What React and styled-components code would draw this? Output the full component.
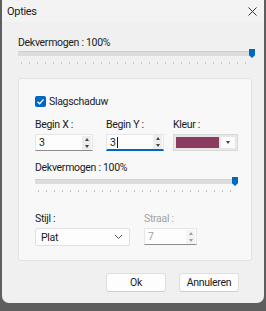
import styled, { createGlobalStyle } from 'styled-components'

const GlobalStyle = createGlobalStyle`
  html, body {
    margin: 0;
    padding: 0;
    background: #5e5e5e;
    font-family: Roboto, "Noto Sans", sans-serif;
    font-size: 10.5px;
    letter-spacing: -0.3px;
    color: #1b1b1b;
  }
`

const Window = styled.div`
  width: 262px;
  height: 303px;
  margin-left: 2px;
  background: #f0f0f0;
  border-radius: 0 0 7px 7px;
  display: flex;
  flex-direction: column;
  overflow: hidden;
`

const TitleBar = styled.div`
  height: 22px;
  padding: 0 7px 0 5px;
  display: flex;
  align-items: center;
  justify-content: space-between;
  background: #f3f3f3;
  font-size: 11px;
`

const Body = styled.div`
  padding: 14px 12px 0 16px;
  display: flex;
  flex-direction: column;
`

const Label = styled.div`
  font-size: 10.5px;
  line-height: 13px;
  color: ${p => (p.disabled ? '#a3a3a3' : '#1b1b1b')};
`

const SliderWrap = styled.div`
  position: relative;
  width: ${p => p.width}px;
  height: 16px;
  margin-top: ${p => p.top || 0}px;
`

const Track = styled.div`
  position: absolute;
  left: 0;
  right: 3px;
  top: 2px;
  height: 4px;
  background: #dcdcdc;
  border-top: 1px solid #d0d0d0;
`

const Ticks = styled.div`
  position: absolute;
  left: 3px;
  right: 3px;
  top: 13px;
  height: 2px;
  background: repeating-linear-gradient(90deg, #c4c4c4 0 1px, transparent 1px 8px);
`

const Thumb = styled.div`
  position: absolute;
  right: 0;
  top: 0;
  width: 6px;
  height: 9px;
  background: #0067c0;
  clip-path: polygon(0 0, 100% 0, 100% 70%, 50% 100%, 0 70%);
`

const Panel = styled.div`
  margin-top: 13px;
  width: 234px;
  height: 183px;
  box-sizing: border-box;
  background: #f8f8f8;
  border: 1px solid #e3e3e3;
  border-radius: 3px;
  padding: 16px 0 0 16px;
  display: flex;
  flex-direction: column;
`

const CheckRow = styled.label`
  height: 13px;
  display: flex;
  align-items: center;
  gap: 3px;
`

const Box = styled.span`
  width: 11px;
  height: 11px;
  border-radius: 2px;
  background: #0067c0;
  display: flex;
  align-items: center;
  justify-content: center;
`

const Row = styled.div`
  display: flex;
  gap: ${p => p.gap || 13}px;
  margin-top: ${p => p.top || 0}px;
`

const Field = styled.div`
  display: flex;
  flex-direction: column;
  gap: 3px;
`

const ColorField = styled(Field)`
  margin-left: -4px;
`

const Input = styled.div`
  width: ${p => p.width}px;
  height: 17px;
  box-sizing: border-box;
  background: #fdfdfd;
  border: 1px solid #e6e6e6;
  border-bottom: ${p => (p.focused ? '2px solid #0067c0' : '1px solid #8c8c8c')};
  display: flex;
  align-items: center;
  padding-left: 3px;
  color: ${p => (p.disabled ? '#a3a3a3' : '#1b1b1b')};
`

const Caret = styled.span`
  width: 1px;
  height: 11px;
  background: #1b1b1b;
  margin-left: 1px;
`

const Spin = styled.div`
  margin-left: auto;
  width: 9px;
  height: 14px;
  margin-right: 1px;
  background: #ededed;
  display: flex;
  flex-direction: column;
  align-items: center;
  justify-content: space-around;
  opacity: ${p => (p.disabled ? 0.5 : 1)};
`

const Tri = styled.span`
  width: 0;
  height: 0;
  border-left: 2.5px solid transparent;
  border-right: 2.5px solid transparent;
  ${p => (p.up ? 'border-bottom: 3px solid #444;' : 'border-top: 3px solid #444;')}
`

const ColorBox = styled.div`
  width: 65px;
  height: 17px;
  box-sizing: border-box;
  background: #e7e7e7;
  border: 1px solid #d9d9d9;
  padding: 2px;
  display: flex;
  gap: 2px;
`

const Swatch = styled.div`
  flex: 1;
  background: #8a3b5f;
`

const DropBtn = styled.div`
  width: 14px;
  background: #fbfbfb;
  display: flex;
  align-items: center;
  justify-content: center;
`

const Select = styled.div`
  width: 95px;
  height: 18px;
  box-sizing: border-box;
  background: #fdfdfd;
  border: 1px solid #e0e0e0;
  border-radius: 2px;
  display: flex;
  align-items: center;
  justify-content: space-between;
  padding: 0 6px 0 5px;
`

const Footer = styled.div`
  display: flex;
  justify-content: flex-end;
  gap: 13px;
  padding: 12px 13px 0 0;
`

const Button = styled.div`
  width: 60px;
  height: 19px;
  box-sizing: border-box;
  background: #fdfdfd;
  border: 1px solid #dedede;
  border-bottom-color: #cfcfcf;
  border-radius: 3px;
  display: flex;
  align-items: center;
  justify-content: center;
`

const Slider = ({ width, top }) => (
  <SliderWrap width={width} top={top}>
    <Track />
    <Ticks />
    <Thumb />
  </SliderWrap>
)

const Spinner = ({ disabled }) => (
  <Spin disabled={disabled}>
    <Tri up />
    <Tri />
  </Spin>
)

const App = () => {
  return <>
    <GlobalStyle />
    <Window>
      <TitleBar>
        <span>Opties</span>
        <svg width="9" height="9" viewBox="0 0 9 9">
          <path d="M0.5 0.5L8.5 8.5M8.5 0.5L0.5 8.5" stroke="#333" strokeWidth="1" />
        </svg>
      </TitleBar>
      <Body>
        <Label>Dekvermogen : 100%</Label>
        <Slider width={237} />
        <Panel>
          <CheckRow>
            <Box>
              <svg width="9" height="9" viewBox="0 0 9 9">
                <path d="M1.5 4.8L3.6 6.8L7.6 2.4" stroke="#fff" strokeWidth="1.3" fill="none" />
              </svg>
            </Box>
            Slagschaduw
          </CheckRow>
          <Row top={10} gap={13}>
            <Field>
              <Label>Begin X :</Label>
              <Input width={58}>3<Spinner /></Input>
            </Field>
            <Field>
              <Label>Begin Y :</Label>
              <Input width={58} focused>3<Caret /><Spinner /></Input>
            </Field>
            <ColorField>
              <Label>Kleur :</Label>
              <ColorBox>
                <Swatch />
                <DropBtn><Tri /></DropBtn>
              </ColorBox>
            </ColorField>
          </Row>
          <Row top={10}>
            <Field>
              <Label>Dekvermogen : 100%</Label>
              <Slider width={203} top={0} />
            </Field>
          </Row>
          <Row top={19} gap={14}>
            <Field>
              <Label>Stijl :</Label>
              <Select>
                Plat
                <svg width="9" height="6" viewBox="0 0 9 6">
                  <path d="M1 1L4.5 4.5L8 1" stroke="#555" strokeWidth="1" fill="none" />
                </svg>
              </Select>
            </Field>
            <Field>
              <Label disabled>Straal :</Label>
              <Input width={53} disabled>7<Spinner disabled /></Input>
            </Field>
          </Row>
        </Panel>
        <Footer>
          <Button>Ok</Button>
          <Button>Annuleren</Button>
        </Footer>
      </Body>
    </Window>
  </>
}

export default App
